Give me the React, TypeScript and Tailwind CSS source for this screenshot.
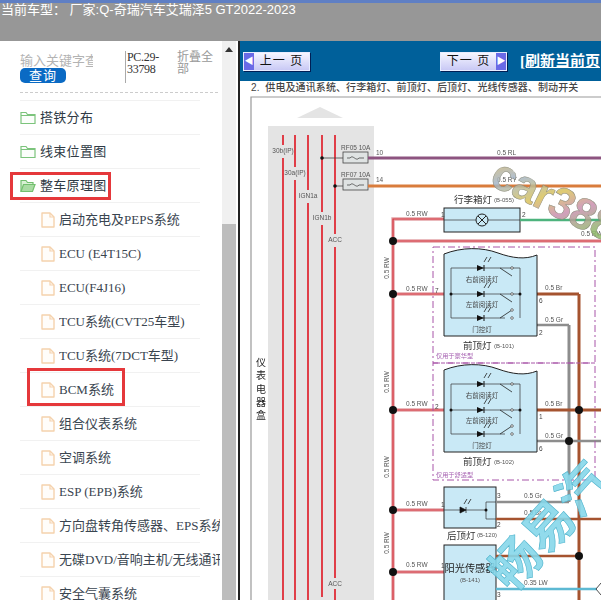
import React from 'react'

const FOLDERS = [
  { label: '搭铁分布', open: false },
  { label: '线束位置图', open: false },
  { label: '整车原理图', open: true },
]

const PAGES = [
  '启动充电及PEPS系统',
  'ECU (E4T15C)',
  'ECU(F4J16)',
  'TCU系统(CVT25车型)',
  'TCU系统(7DCT车型)',
  'BCM系统',
  '组合仪表系统',
  '空调系统',
  'ESP (EPB)系统',
  '方向盘转角传感器、EPS系统',
  '无碟DVD/音响主机/无线通讯',
  '安全气囊系统',
]

function FolderIcon({ open }: { open: boolean }) {
  if (open) {
    return (
      <svg width="16" height="14" viewBox="0 0 16 14" className="shrink-0">
        <path d="M1 12.5V1.5h5l1.5 2H13v2" fill="#d8f0d4" stroke="#72bf6e" strokeWidth="1.2" />
        <path d="M1 12.5l2.5-7H15l-2.5 7z" fill="#a9dba3" stroke="#72bf6e" strokeWidth="1.2" />
      </svg>
    )
  }
  return (
    <svg width="16" height="14" viewBox="0 0 16 14" className="shrink-0">
      <path d="M1 12.5V1.5h5l1.5 2h7.5v9z" fill="#fbfefb" stroke="#7cc47c" strokeWidth="1.2" />
      <path d="M1 4.5h14" stroke="#7cc47c" strokeWidth="1" />
    </svg>
  )
}

function DocIcon() {
  return (
    <svg width="14" height="16" viewBox="0 0 14 16" className="shrink-0">
      <path d="M1 1h8l4 4v10H1z" fill="#fffdfa" stroke="#f5d2ad" strokeWidth="1.4" strokeLinejoin="round" />
      <path d="M9 1v4h4" fill="none" stroke="#f5d2ad" strokeWidth="1.2" />
    </svg>
  )
}

function Sidebar() {
  return (
    <div className="relative w-[238px] shrink-0 flex bg-white">
      <div className="w-[222px] shrink-0 overflow-hidden">
        <div className="h-[52px] flex pl-5 relative">
          <div className="w-[73px] pt-[11px] text-[13px] leading-[17px] text-[#b3b3b3] overflow-hidden whitespace-nowrap">
            输入关键字查询
            <div className="w-[46px] h-[15px] rounded-[5px] bg-[#0a6ac4] text-white text-center text-[13px] leading-[15px] tracking-[1px] -mt-[1px]">查询</div>
          </div>
          <div className="ml-[32px] mt-[10px] h-[32px] w-[46px] border-l border-[#aaa] pl-px font-['Liberation_Serif'] text-[12px] leading-[12px] text-[#333] tracking-tight">PC.29-33798</div>
          <div className="ml-[6px] mt-[10px] w-[38px] text-[12px] leading-[12px] text-[#999]">折叠全部</div>
          <div className="absolute left-5 right-1 bottom-0 border-b border-dashed border-[#ccc]" />
        </div>
        <div className="w-[180px] ml-5 h-[8px] border-b border-[#f1f1f1]" />
        {FOLDERS.map(f => (
          <div key={f.label} className="w-[180px] ml-5 h-[34px] flex items-center gap-1 border-b border-[#f1f1f1] text-[13px] text-[#2f3a45] tracking-[0.3px] whitespace-nowrap">
            <FolderIcon open={f.open} />
            <span>{f.label}</span>
          </div>
        ))}
        {PAGES.map(p => (
          <div key={p} className="w-[180px] ml-5 h-[34px] flex items-center border-b border-[#f1f1f1] text-[13px] text-[#3a4550] whitespace-nowrap font-['Liberation_Serif','Noto_Sans_CJK_SC',serif]">
            <div className="w-[21px] shrink-0" />
            <DocIcon />
            <span className="ml-1 w-[161px] shrink-0 overflow-hidden">{p}</span>
          </div>
        ))}
      </div>
      <div className="w-[14px] shrink-0 flex flex-col bg-[#f0f0f0]">
        <div className="h-[183px] pt-[6px] flex justify-center">
          <div className="w-0 h-0 border-x-[4px] border-x-transparent border-b-[5px] border-b-[#333]" />
        </div>
        <div className="flex-1 bg-[#bdbdbd]" />
      </div>
      <div className="w-[2px] bg-white" />
      <div className="absolute left-[10px] top-[131px] w-[101px] h-[28px] border-[3px] border-[#e5383b]" />
      <div className="absolute left-[27px] top-[327px] w-[98px] h-[38px] border-[3px] border-[#e5383b]" />
    </div>
  )
}

function PageButton({ label, dir }: { label: string; dir: 'prev' | 'next' }) {
  const arrow = (
    <div className="w-[10px] h-full bg-[#6a6ae6] flex items-center justify-center text-white text-[9px] leading-none">
      {dir === 'prev' ? '◀' : '▶'}
    </div>
  )
  return (
    <div className="w-[67px] h-[19px] flex items-center border border-[#e8ecff] bg-gradient-to-b from-[#f6f6ff] to-[#c9c9f5] text-[12px] text-[#111] shadow-[1px_1px_0_#001f55]">
      {dir === 'prev' && arrow}
      <span className="flex-1 text-center tracking-[1px] whitespace-nowrap">{label}</span>
      {dir === 'next' && arrow}
    </div>
  )
}

function Dot({ x, y, r = 4 }: { x: number; y: number; r?: number }) {
  return <circle cx={x} cy={y} r={r} fill="#111" />
}

function RwWire({ d }: { d: string }) {
  return (
    <g fill="none">
      <path d={d} stroke="#e3a4a8" strokeWidth="3.4" />
      <path d={d} stroke="#d8343e" strokeWidth="1.2" />
    </g>
  )
}

function Label({ x, y, children, size = 6.5, anchor = 'start', fill = '#555' }: { x: number; y: number; children: React.ReactNode; size?: number; anchor?: 'start' | 'middle'; fill?: string }) {
  return <text x={x} y={y} fontSize={size} textAnchor={anchor} fill={fill} fontFamily="'Liberation Sans','Noto Sans CJK SC',sans-serif">{children}</text>
}

function LampBox({ y, pins }: { y: number; pins: [string, string, string] }) {
  return (
    <g transform={`translate(0 ${y})`}>
      <path d="M444 64C462 57 482 57 498 63C512 68 525 70 537 65V146H444z" fill="#c9e9f6" stroke="#222" strokeWidth="1" />
      <path d="M451 78H520V128M451 78V128H505M451 104H520" fill="none" stroke="#333" strokeWidth="0.7" />
      <path d="M477 75l7 3-7 3zM477 101l7 3-7 3zM477 125l7 3-7 3z" fill="#111" />
      <path d="M484 75v6M484 101v6M484 125v6" stroke="#111" />
      <path d="M484 72l3-5M488 72l3-5M484 98l3-5M488 98l3-5M484 122l3-5M488 122l3-5" stroke="#222" strokeWidth="0.8" />
      <path d="M500 78l12 8M500 104l12 8M500 128l12-8" stroke="#222" strokeWidth="0.8" />
      <circle cx="512" cy="78" r="1.3" fill="#fff" stroke="#222" strokeWidth="0.6" />
      <circle cx="512" cy="104" r="1.3" fill="#fff" stroke="#222" strokeWidth="0.6" />
      <circle cx="512" cy="120" r="1.3" fill="#fff" stroke="#222" strokeWidth="0.6" />
      <circle cx="512" cy="128" r="1.3" fill="#fff" stroke="#222" strokeWidth="0.6" />
      <Dot x={451} y={104} r={1.5} />
      <Dot x={520} y={104} r={1.5} />
      <Label x={482} y={92} anchor="middle" fill="#444">右前阅读灯</Label>
      <Label x={482} y={117} anchor="middle" fill="#444">左前阅读灯</Label>
      <Label x={482} y={142} anchor="middle" fill="#444">门控灯</Label>
      <Label x={435} y={103} fill="#444">{pins[0]}</Label>
      <Label x={539} y={113} fill="#444">{pins[1]}</Label>
      <Label x={539} y={145} fill="#444">{pins[2]}</Label>
    </g>
  )
}

// the wiring page is one scanned drawing, so it stays a single svg in page coordinates
function Diagram() {
  const rails = [
    { x: 283, gapY: 151, to: 600 },
    { x: 295, gapY: 173, to: 600 },
    { x: 308, gapY: 196, to: 600 },
    { x: 322, gapY: 218, to: 597 },
    { x: 335, gapY: 240, to: 600 },
  ]
  return (
    <svg viewBox="240 96 361 504" className="block w-[361px] h-[504px] blur-[0.35px]">
      <defs>
        <linearGradient id="wm" x1="0" y1="0" x2="1" y2="0.4">
          <stop offset="0" stopColor="#e8b84a" />
          <stop offset="0.3" stopColor="#a3b5c9" />
          <stop offset="0.55" stopColor="#d9c25a" />
          <stop offset="0.75" stopColor="#c98fb0" />
          <stop offset="1" stopColor="#8fb86a" />
        </linearGradient>
      </defs>
      <rect x="240" y="96" width="361" height="504" fill="#fff" />
      <path d="M251 600V97H601" fill="none" stroke="#999" strokeWidth="1.2" />
      <rect x="268" y="126" width="106" height="474" fill="#e4e4e4" />
      <path d="M297 118L320 107L343 118z" fill="#e4e4e4" />

      {rails.map(r => (
        <g key={r.x} stroke="#df2b36" strokeWidth="1.8">
          <line x1={r.x} y1={135} x2={r.x} y2={r.gapY - 6} />
          <line x1={r.x} y1={r.gapY + 7} x2={r.x} y2={r.to} />
        </g>
      ))}
      <rect x="326" y="578" width="18" height="11" fill="#e4e4e4" />
      <Label x={283} y={153} anchor="middle" size={6.5}>30b(IP)</Label>
      <Label x={295} y={175} anchor="middle" size={6.5}>30a(IP)</Label>
      <Label x={308} y={198} anchor="middle" size={6.5}>IGN1a</Label>
      <Label x={322} y={220} anchor="middle" size={6.5}>IGN1b</Label>
      <Label x={335} y={242} anchor="middle" size={6.5}>ACC</Label>
      <Label x={335} y={586} anchor="middle" size={6.5}>ACC</Label>

      {['仪', '表', '电', '器', '盒'].map((c, i) => (
        <Label key={c} x={261} y={366 + i * 13.3} anchor="middle" size={10} fill="#222">{c}</Label>
      ))}

      <path d="M322 158H343M335 186H343" stroke="#444" strokeWidth="0.8" />
      <Dot x={322} y={158} r={1.8} />
      <Dot x={335} y={186} r={1.8} />
      {[152, 179].map(y => (
        <g key={y}>
          <rect x="343" y={y} width="25" height="11" fill="#dfe3e3" stroke="#444" strokeWidth="0.8" />
          <path d={`M347 ${y + 6}h3c3-4 6 4 9 0h5`} fill="none" stroke="#333" strokeWidth="0.7" />
        </g>
      ))}
      <Label x={341} y={150}>RF05 10A</Label>
      <Label x={341} y={177}>RF07 10A</Label>
      <Label x={376} y={155}>10</Label>
      <Label x={376} y={182}>14</Label>
      <Label x={497} y={155}>0.5 RL</Label>
      <Label x={497} y={182}>0.5 RY</Label>
      <line x1="368" y1="158" x2="601" y2="158" stroke="#8d5480" strokeWidth="3" />
      <line x1="368" y1="186" x2="601" y2="186" stroke="#d97c3c" strokeWidth="3" />

      <RwWire d="M444 219H393V600" />
      <RwWire d="M393 241H601" />
      <RwWire d="M393 294H444" />
      <RwWire d="M393 410H444" />
      <RwWire d="M393 510H444" />
      <RwWire d="M393 572H444" />
      {[241, 294, 410, 510, 572].map(y => <Dot key={y} x={393} y={y} />)}
      <Label x={406} y={216}>0.5 RW</Label>
      <Label x={406} y={291}>0.5 RW</Label>
      <Label x={406} y={406}>0.5 RW</Label>
      <Label x={406} y={506}>0.5 RW</Label>
      <Label x={406} y={567}>0.5 RW</Label>
      <Label x={581} y={236}>0.5 RW</Label>
      {[268, 382, 467, 543].map(y => (
        <text key={y} x={389} y={y} fontSize={6.5} fill="#555" fontFamily="'Liberation Sans',sans-serif" textAnchor="middle" transform={`rotate(-90 389 ${y})`}>0.5 RW</text>
      ))}

      <rect x="444" y="208" width="76" height="24" fill="#c9e9f6" stroke="#222" strokeWidth="1" />
      <path d="M444 220H476M488 220H520" stroke="#333" strokeWidth="0.7" />
      <circle cx="482" cy="220" r="6" fill="none" stroke="#222" />
      <path d="M478 216l8 8M486 216l-8 8" stroke="#222" />
      <Label x={441} y={217} fill="#444">1</Label>
      <Label x={522} y={217} fill="#444">2</Label>
      <Label x={454} y={203} size={9.5} fill="#333">行李箱灯</Label>
      <Label x={494} y={202} size={6}>(B-055)</Label>
      <line x1="520" y1="220" x2="601" y2="220" stroke="#4db37d" strokeWidth="2.4" />

      <line x1="579" y1="294" x2="579" y2="600" stroke="#a5532f" strokeWidth="3" />
      <line x1="569" y1="325" x2="569" y2="502" stroke="#8d8d8d" strokeWidth="3" />
      <path d="M537 294H579" fill="none" stroke="#a5532f" strokeWidth="3" />
      <path d="M512 325H569" fill="none" stroke="#8d8d8d" strokeWidth="2.4" />
      <line x1="537" y1="410" x2="601" y2="410" stroke="#a5532f" strokeWidth="3" />
      <line x1="512" y1="441" x2="601" y2="441" stroke="#8d8d8d" strokeWidth="2.4" />
      <Dot x={579} y={410} />
      <Dot x={569} y={441} />
      <Label x={545} y={290}>0.5 Br</Label>
      <Label x={545} y={322}>0.5 Gr</Label>
      <Label x={545} y={406}>0.5 Br</Label>
      <Label x={545} y={438}>0.5 Gr</Label>

      <LampBox y={190} pins={['7', '6', '2']} />
      <LampBox y={306} pins={['2', '1', '6']} />
      <Label x={463} y={349} size={9.5} fill="#333">前顶灯</Label>
      <Label x={494} y={348} size={6}>(B-101)</Label>
      <Label x={436} y={358} size={6.2} fill="#a55fb0">仅用于豪华型</Label>
      <Label x={463} y={465} size={9.5} fill="#333">前顶灯</Label>
      <Label x={494} y={464} size={6}>(B-102)</Label>
      <Label x={436} y={477} size={6.2} fill="#a55fb0">仅用于舒适型</Label>
      <path d="M433 247H595V363H433zM433 363H595V480H433z" fill="none" stroke="#a855a8" strokeWidth="1" strokeDasharray="7 3 2 3" />

      <rect x="444" y="487" width="52" height="41" fill="#c9e9f6" stroke="#222" strokeWidth="1" />
      <path d="M444 510H486M486 502H496M486 502V519H496" fill="none" stroke="#333" strokeWidth="0.7" />
      <path d="M460 507l6 3-6 3zM466 507v6" fill="#111" stroke="#111" strokeWidth="0.7" />
      <path d="M464 504l3-5M468 504l3-5" stroke="#222" strokeWidth="0.8" />
      <Dot x={486} y={510} r={1.5} />
      <line x1="496" y1="502" x2="569" y2="502" stroke="#8d8d8d" strokeWidth="2.4" />
      <line x1="496" y1="519" x2="601" y2="519" stroke="#a5532f" strokeWidth="2.4" />
      <Label x={441} y={507} fill="#444">1</Label>
      <Label x={497} y={498} fill="#444">3</Label>
      <Label x={497} y={527} fill="#444">2</Label>
      <Label x={524} y={498}>0.5 Gr</Label>
      <Label x={524} y={515}>0.5 Br</Label>
      <Label x={447} y={539} size={9.5} fill="#333">后顶灯</Label>
      <Label x={477} y={537} size={6}>(B-120)</Label>

      <rect x="444" y="545" width="52" height="60" fill="#c9e9f6" stroke="#222" strokeWidth="1" />
      <Label x={470} y={572} anchor="middle" size={10.2} fill="#222">阳光传感器</Label>
      <Label x={470} y={582} anchor="middle" size={6}>(B-141)</Label>
      <line x1="496" y1="556" x2="579" y2="556" stroke="#a5532f" strokeWidth="2.4" />
      <line x1="496" y1="589" x2="597" y2="589" stroke="#5db9d3" strokeWidth="2.6" />
      <Dot x={579} y={556} />
      <Label x={441} y={568} fill="#444">1</Label>
      <Label x={497} y={597} fill="#444">3</Label>
      <Label x={524} y={585}>0.35 LW</Label>
      <path d="M601 583l-5 6 5 6" fill="#fff" stroke="#222" strokeWidth="0.8" />

      <text x="0" y="0" transform="translate(488 184) rotate(26)" fontSize="44" fontWeight="700" fontFamily="'Liberation Sans',sans-serif" fill="url(#wm)" fillOpacity="0.85" stroke="#8a8a7a" strokeWidth="0.5" letterSpacing="-1">car388</text>
      <text x="0" y="0" transform="translate(512 594) rotate(-48)" fontSize="50" fontWeight="700" fontFamily="'Noto Sans CJK SC',sans-serif" fill="#86d7ea" fillOpacity="0.9" stroke="#4fb3cc" strokeWidth="0.6">畅易汽</text>
    </svg>
  )
}

function RightPane() {
  return (
    <div className="flex-1 min-w-0 flex flex-col overflow-hidden border-l-2 border-[#222] bg-white">
      <div className="h-[40px] shrink-0 bg-[#00609a] flex items-center pl-[3px] whitespace-nowrap overflow-hidden">
        <PageButton label="上一 页" dir="prev" />
        <div className="ml-[130px]"><PageButton label="下一 页" dir="next" /></div>
        <span className="ml-[13px] font-['Liberation_Serif','Noto_Sans_CJK_SC',serif] font-bold text-[15px] text-white underline">[刷新当前页</span>
      </div>
      <div className="h-[15px] shrink-0 pl-[11px] text-[10px] leading-[13px] font-medium text-[#444] tracking-[0.1px] whitespace-nowrap overflow-hidden">2.&nbsp; 供电及通讯系统、行李箱灯、前顶灯、后顶灯、光线传感器、制动开关</div>
      <Diagram />
    </div>
  )
}

export default function App() {
  return (
    <div className="w-[601px] h-[600px] overflow-hidden flex flex-col bg-white font-['Liberation_Sans','Noto_Sans_CJK_SC',sans-serif]">
      <div className="h-[41px] shrink-0 bg-[#979797] border-t-[3px] border-[#5f7fc4] pl-px text-[13px] leading-[14px] text-white whitespace-nowrap">当前车型： 厂家:Q-奇瑞汽车艾瑞泽5 GT2022-2023</div>
      <div className="flex-1 min-h-0 flex">
        <Sidebar />
        <RightPane />
      </div>
    </div>
  )
}
